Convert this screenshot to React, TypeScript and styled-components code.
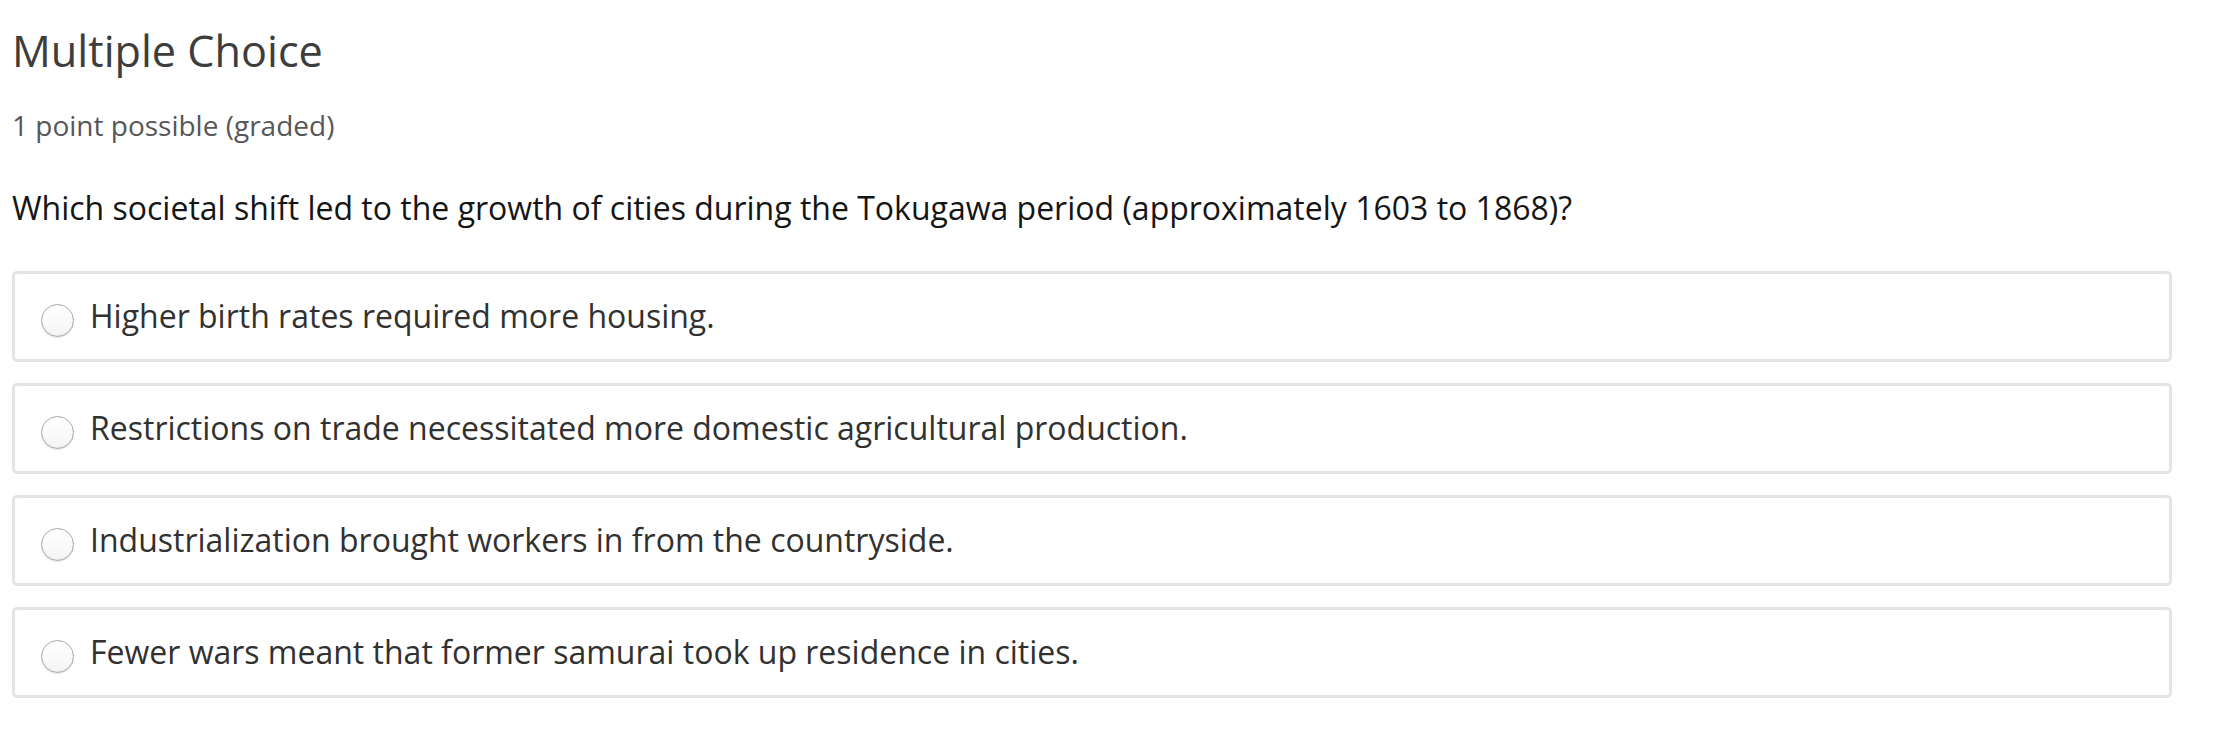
import React from "react";
import styled, { createGlobalStyle } from "styled-components";

const Global = createGlobalStyle`
  html, body { margin: 0; padding: 0; background: #fff; }
  body { font-family: "Open Sans", "Noto Sans", sans-serif; }
`;

const Page = styled.div`
  padding: 26px 52px 0 12px;
  display: flex;
  flex-direction: column;
`;

const Title = styled.h2`
  margin: 0;
  font-size: 43.2px;
  line-height: 50px;
  font-weight: 400;
  color: #3d3d3d;
`;

const Meta = styled.div`
  margin-top: 32px;
  font-size: 28px;
  line-height: 34px;
  color: #575757;
`;

const Question = styled.p`
  margin: 46px 0 0;
  font-size: 32px;
  line-height: 40px;
  color: #151515;
`;

const Choices = styled.div`
  margin-top: 42.5px;
  display: flex;
  flex-direction: column;
  gap: 21px;
`;

const Choice = styled.label`
  display: flex;
  align-items: center;
  border: 3.5px solid #e4e4e4;
  border-radius: 5px;
  padding: 22px 20px 22px 26px;
  font-size: 32px;
  line-height: 40px;
  color: #313131;
  cursor: pointer;
`;

const Radio = styled.span`
  flex: none;
  width: 31px;
  height: 31px;
  margin-top: 8px;
  margin-right: 16px;
  border-radius: 50%;
  border: 1px solid #aaaaaa;
  background: linear-gradient(#ffffff, #f5f5f5);
  box-shadow: inset 0 -1px 1px rgba(0, 0, 0, 0.06), 0 1px 0 rgba(0, 0, 0, 0.1);
`;

const choices = [
  "Higher birth rates required more housing.",
  "Restrictions on trade necessitated more domestic agricultural production.",
  "Industrialization brought workers in from the countryside.",
  "Fewer wars meant that former samurai took up residence in cities.",
];

export default function App() {
  return (
    <>
      <Global />
      <Page>
        <Title>Multiple Choice</Title>
        <Meta>1 point possible (graded)</Meta>
        <Question>
          Which societal shift led to the growth of cities during the Tokugawa period (approximately 1603 to 1868)?
        </Question>
        <Choices>
          {choices.map((c) => (
            <Choice key={c}>
              <Radio />
              {c}
            </Choice>
          ))}
        </Choices>
      </Page>
    </>
  );
}
